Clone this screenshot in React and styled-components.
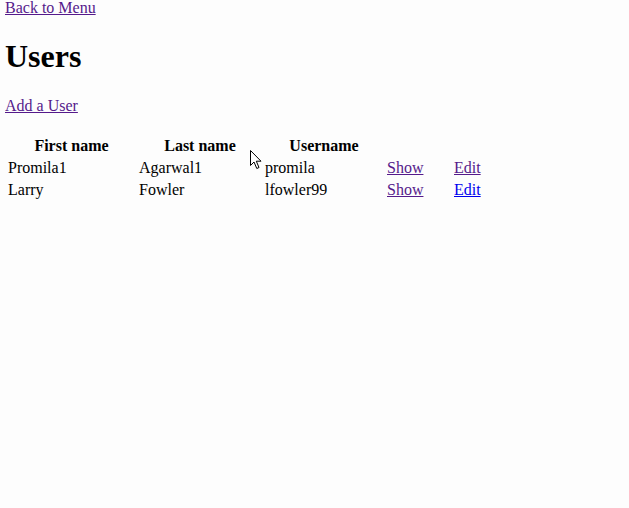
import styled, { createGlobalStyle } from "styled-components";

const GlobalStyle = createGlobalStyle`
  html, body {
    background: #fdfdfd;
  }
  body {
    margin: -1px 5px 0;
    font-family: "Liberation Serif", "Times New Roman", serif;
    font-size: 16px;
    color: #000;
  }
`;

const Page = styled.div`
  position: relative;
`;

const NavLink = styled.a`
  color: ${(props) => (props.$fresh ? "#0000ee" : "#551a8b")};
  text-decoration: underline;
  cursor: pointer;
`;

const Title = styled.h1`
  font-size: 32px;
  font-weight: 700;
  margin: 21.44px 0;
`;

const Para = styled.p`
  margin: 16px 0;
`;

const UsersTable = styled.table`
  border-spacing: 2px;
  margin-top: 19px;
`;

const HeadCell = styled.th`
  width: ${(props) => props.$w}px;
  box-sizing: border-box;
  padding: 1px;
  font-weight: 700;
  text-align: center;
`;

const Cell = styled.td`
  padding: 1px;
  text-align: left;
`;

const Cursor = styled.svg`
  position: absolute;
  left: 245px;
  top: 151px;
  pointer-events: none;
`;

const users = [
  { first: "Promila1", last: "Agarwal1", username: "promila", editVisited: true },
  { first: "Larry", last: "Fowler", username: "lfowler99", editVisited: false },
];

const App = () => {
  return (
    <Page>
      <GlobalStyle />
      <NavLink>Back to Menu</NavLink>
      <Title>Users</Title>
      <Para>
        <NavLink>Add a User</NavLink>
      </Para>
      <UsersTable>
        <thead>
          <tr>
            <HeadCell $w={129}>First name</HeadCell>
            <HeadCell $w={124}>Last name</HeadCell>
            <HeadCell $w={120}>Username</HeadCell>
            <HeadCell $w={65}></HeadCell>
            <HeadCell $w={40}></HeadCell>
          </tr>
        </thead>
        <tbody>
          {users.map((u) => (
            <tr key={u.username}>
              <Cell>{u.first}</Cell>
              <Cell>{u.last}</Cell>
              <Cell>{u.username}</Cell>
              <Cell>
                <NavLink>Show</NavLink>
              </Cell>
              <Cell>
                <NavLink $fresh={!u.editVisited}>Edit</NavLink>
              </Cell>
            </tr>
          ))}
        </tbody>
      </UsersTable>
      <Cursor width="13" height="20" viewBox="0 0 13 20">
        <path
          d="M0.5 0.5 L0.5 15.5 L4 12 L6.8 18.5 L9 17.5 L6.3 11.2 L11 11.2 Z"
          fill="#fff"
          stroke="#000"
          strokeWidth="1"
        />
      </Cursor>
    </Page>
  );
};

export default App;
